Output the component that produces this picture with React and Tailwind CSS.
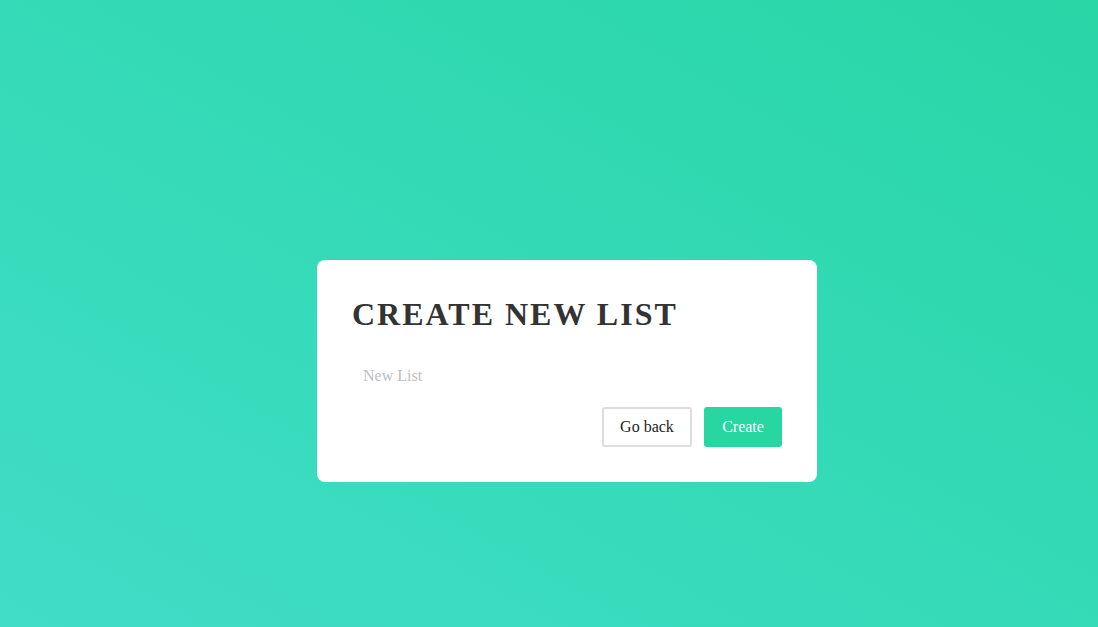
export default function App() {
  return (
    <div
      className="w-full h-[627px] overflow-hidden bg-[linear-gradient(to_top_right,#40ddc7,#29d6a6)]"
      style={{ fontFamily: '"Liberation Serif", "Times New Roman", serif' }}
    >
      <div className="pt-[260px] pl-[317px]">
        <div className="w-[500px] h-[222px] bg-white rounded-lg px-[35px] pt-[32px]">
          <h1 className="text-[32px] leading-[44px] font-bold tracking-[2px] text-[#333333]">CREATE NEW LIST</h1>
          <input
            className="mt-[25px] ml-[11px] w-[300px] h-[30px] text-[16px] outline-none placeholder:text-[#bdbdc4] text-[#333]"
            placeholder="New List"
          />
          <div className="mt-[16px] flex justify-end gap-[12px]">
            <button className="w-[90px] h-[40px] border-2 border-[#dddddd] rounded-[3px] text-[16px] text-[#222] bg-white">Go back</button>
            <button className="w-[78px] h-[40px] rounded-[3px] text-[16px] text-white bg-[#27d6a1]">Create</button>
          </div>
        </div>
      </div>
    </div>
  );
}
